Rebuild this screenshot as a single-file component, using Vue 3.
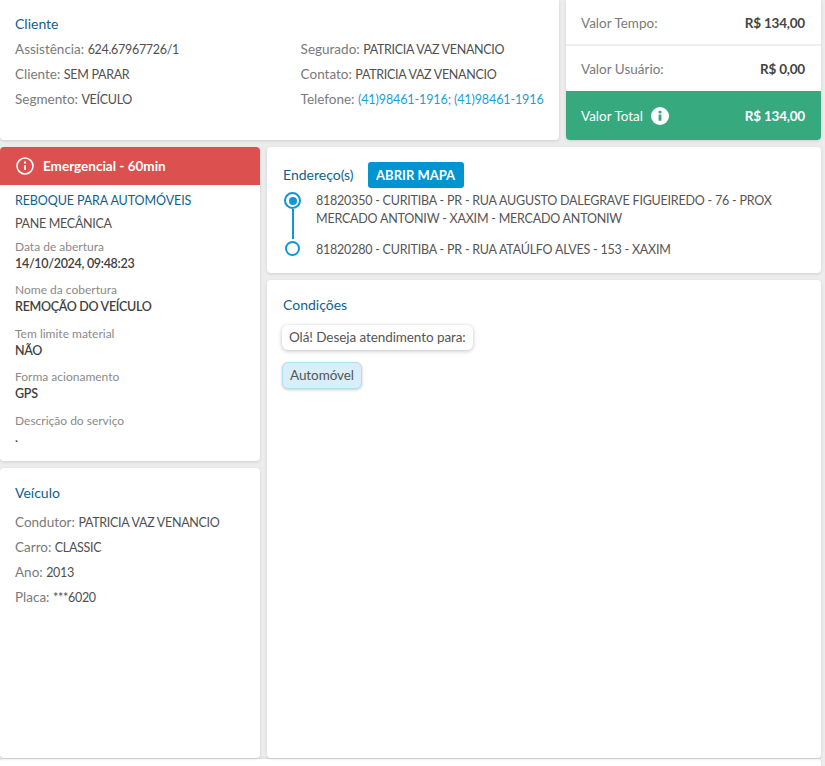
<script setup>
const clientLeft = [
  ['Assistência:', '624.67967726/1'],
  ['Cliente:', 'SEM PARAR'],
  ['Segmento:', 'VEÍCULO'],
]
const clientRight = [
  ['Segurado:', 'PATRICIA VAZ VENANCIO'],
  ['Contato:', 'PATRICIA VAZ VENANCIO'],
]
const details = [
  ['Data de abertura', '14/10/2024, 09:48:23'],
  ['Nome da cobertura', 'REMOÇÃO DO VEÍCULO'],
  ['Tem limite material', 'NÃO'],
  ['Forma acionamento', 'GPS'],
  ['Descrição do serviço', '.'],
]
const vehicle = [
  ['Condutor:', 'PATRICIA VAZ VENANCIO'],
  ['Carro:', 'CLASSIC'],
  ['Ano:', '2013'],
  ['Placa:', '***6020'],
]
</script>

<template>
  <div class="page">
    <div class="top">
      <section class="card client">
        <h2 class="title">Cliente</h2>
        <div class="client-grid">
          <div>
            <p v-for="r in clientLeft" :key="r[0]" class="line"><span class="k">{{ r[0] }}</span> <span class="v">{{ r[1] }}</span></p>
          </div>
          <div>
            <p v-for="r in clientRight" :key="r[0]" class="line"><span class="k">{{ r[0] }}</span> <span class="v">{{ r[1] }}</span></p>
            <p class="line"><span class="k">Telefone:</span> <span class="link">(41)98461-1916; (41)98461-1916</span></p>
          </div>
        </div>
      </section>
      <section class="card values">
        <div class="val"><span class="k">Valor Tempo:</span><b>R$ 134,00</b></div>
        <div class="val"><span class="k">Valor Usuário:</span><b>R$ 0,00</b></div>
        <div class="val total">
          <span class="total-label">Valor Total
            <svg width="18" height="18" viewBox="0 0 18 18"><circle cx="9" cy="9" r="9" fill="#fff"/><rect x="7.6" y="7.6" width="2.8" height="6.2" rx=".5" fill="#36a97f"/><circle cx="9" cy="5" r="1.6" fill="#36a97f"/></svg>
          </span>
          <b>R$ 134,00</b>
        </div>
      </section>
    </div>
    <div class="main">
      <div class="col-left">
        <section class="card service">
          <div class="alert">
            <svg width="18" height="18" viewBox="0 0 18 18" fill="none" stroke="#fff" stroke-width="1.6"><circle cx="9" cy="9" r="8"/><path d="M9 8v5" stroke-width="1.8"/><path d="M9 4.6v1.8" stroke-width="1.8"/></svg>
            <span>Emergencial - 60min</span>
          </div>
          <div class="service-body">
            <h3 class="service-title">REBOQUE PARA AUTOMÓVEIS</h3>
            <p class="sub">PANE MECÂNICA</p>
            <div v-for="d in details" :key="d[0]" class="detail">
              <small>{{ d[0] }}</small>
              <strong>{{ d[1] }}</strong>
            </div>
          </div>
        </section>
        <section class="card vehicle">
          <h2 class="title">Veículo</h2>
          <p v-for="r in vehicle" :key="r[0]" class="line"><span class="k">{{ r[0] }}</span> <span class="v">{{ r[1] }}</span></p>
        </section>
      </div>
      <div class="col-right">
        <section class="card address">
          <div class="addr-head">
            <h2 class="title">Endereço(s)</h2>
            <button class="map">ABRIR MAPA</button>
          </div>
          <div class="stop first">
            <span class="dot filled"></span>
            <p>81820350 - CURITIBA - PR - RUA AUGUSTO DALEGRAVE FIGUEIREDO - 76 - PROX MERCADO ANTONIW - XAXIM - MERCADO ANTONIW</p>
          </div>
          <div class="stop">
            <span class="dot"></span>
            <p>81820280 - CURITIBA - PR - RUA ATAÚLFO ALVES - 153 - XAXIM</p>
          </div>
        </section>
        <section class="card conditions">
          <h2 class="title">Condições</h2>
          <div class="bubble">Olá! Deseja atendimento para:</div>
          <div class="bubble answer">Automóvel</div>
        </section>
      </div>
    </div>
    <div class="footer"></div>
  </div>
</template>

<style>
html, body { margin: 0; background: #ececec; }
</style>

<style scoped>
.page {
  width: 825px;
  height: 766px;
  overflow: hidden;
  background: #ececec;
  font-family: Lato, "Noto Sans", sans-serif;
  font-size: 13.5px;
  color: #505050;
  box-sizing: border-box;
  padding-right: 4px;
}
.card {
  background: #fff;
  border-radius: 4px;
  box-shadow: 0 1px 3px rgba(0, 0, 0, .12);
  box-sizing: border-box;
}
p, h2, h3 { margin: 0; font-weight: 400; }
.top { display: flex; gap: 7px; height: 140px; }
.client { width: 559px; padding: 14px 15px 0; border-radius: 0 0 4px 4px; }
.title { font-size: 14px; line-height: 20px; color: #0f5f8c; }
.client-grid { display: grid; grid-template-columns: 285.6px 1fr; margin-top: 3px; }
.line { height: 25px; line-height: 25px; white-space: nowrap; }
.k { color: #7a7a7a; }
.v { font-size: 12.5px; letter-spacing: -.3px; }
.link { color: #1a9fd8; font-size: 12.5px; letter-spacing: -.1px; }
.values { width: 255px; overflow: hidden; display: flex; flex-direction: column; border-radius: 0 0 4px 4px; }
.val {
  display: flex;
  justify-content: space-between;
  align-items: center;
  padding: 0 16px 0 15px;
  height: 45px;
  box-sizing: border-box;
}
.val:first-child { height: 46px; padding-top: 2px; border-bottom: 2px solid #efefef; }
.val b { color: #444; font-weight: 700; letter-spacing: -.2px; }
.val.total { flex: 1; background: #36a97f; color: #fff; }
.val.total b { color: #fff; }
.total-label { display: flex; align-items: center; gap: 8px; }
.main { display: flex; gap: 7px; margin-top: 7px; height: 611px; }
.col-left { width: 260px; display: flex; flex-direction: column; gap: 7px; }
.col-right { width: 554px; display: flex; flex-direction: column; gap: 7px; }
.service { height: 314px; overflow: hidden; }
.alert {
  height: 38px;
  background: #dc5050;
  color: #fff;
  font-weight: 700;
  display: flex;
  align-items: center;
  gap: 9px;
  padding-left: 16px;
}
.service-body { padding: 7px 15px 0; }
.service-title { font-size: 12.5px; letter-spacing: -.1px; line-height: 18px; color: #0f5f8c; }
.sub { line-height: 20px; margin-top: 4px; margin-bottom: 4.5px; font-size: 12.5px; letter-spacing: -.3px; }
.detail { display: flex; flex-direction: column; margin-bottom: 10.5px; }
.detail small { font-size: 12px; line-height: 16px; color: #8a8a8a; }
.detail strong { font-weight: 600; font-size: 12.5px; letter-spacing: -.3px; line-height: 17px; color: #3f3f3f; }
.vehicle { flex: 1; padding: 15px 15px 0; }
.vehicle .title { margin-bottom: 7px; }
.address { height: 126px; padding: 15px 16px 0; }
.addr-head { display: flex; align-items: center; gap: 14px; height: 26px; }
.map {
  border: 0;
  height: 26px;
  width: 96px;
  border-radius: 3px;
  background: #0095d1;
  color: #fff;
  font: 700 13px Lato, sans-serif;
  padding: 0;
}
.stop { position: relative; padding-left: 33px; font-size: 12.5px; letter-spacing: -.22px; line-height: 18px; color: #555; }
.stop.first { margin-top: 4px; height: 49px; }
.stop p { width: 470px; }
.dot {
  position: absolute;
  left: 2px;
  top: 0;
  width: 15px;
  height: 15px;
  border: 2px solid #0e97d3;
  border-radius: 50%;
  box-sizing: border-box;
  background: #fff;
}
.dot.filled { top: 0; width: 17px; height: 17px; left: 1px; }
.dot.filled::before {
  content: "";
  position: absolute;
  inset: 2.5px;
  border-radius: 50%;
  background: #0e97d3;
}
.dot.filled::after {
  content: "";
  position: absolute;
  left: 5.5px;
  top: 15px;
  width: 2px;
  height: 30px;
  background: #0e97d3;
}
.conditions { flex: 1; padding: 15px 16px 0 15px; }
.conditions .title { margin-bottom: 10px; padding-left: 1px; }
.bubble {
  width: fit-content;
  height: 25px;
  line-height: 25px;
  padding: 0 7px;
  border-radius: 6px;
  background: #fff;
  box-shadow: 0 1px 4px rgba(0, 0, 0, .25);
  color: #555;
  letter-spacing: -.08px;
}
.answer {
  margin-top: 12px;
  height: 27px;
  padding: 0 7px;
  background: #d8eef8;
  border: 1px solid #b3def2;
  box-sizing: border-box;
  box-shadow: 0 1px 3px rgba(0, 0, 0, .2);
}
.footer {
  height: 10px;
  margin-top: 1px;
  background: #fff;
  border-radius: 3px 3px 0 0;
  box-shadow: 0 -1px 2px rgba(0, 0, 0, .08);
}
</style>
